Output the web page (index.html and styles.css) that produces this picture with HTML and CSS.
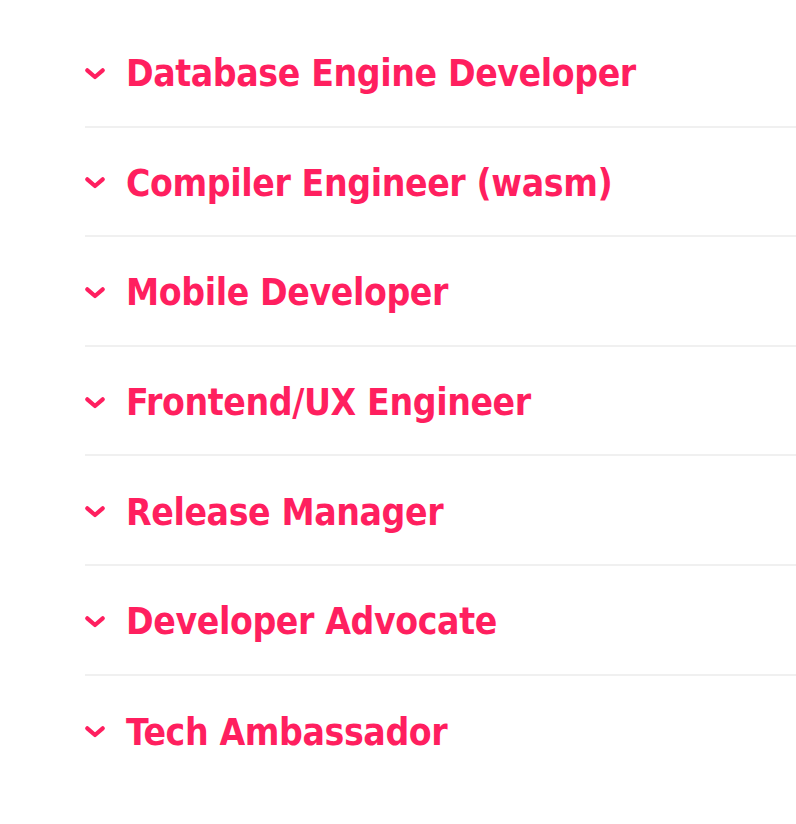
FILE: index.html
```html
<!DOCTYPE html>
<html>
<head>
<meta charset="utf-8">
<link rel="stylesheet" href="styles.css">
</head>
<body>
<ul class="list">
  <li class="item"><svg class="chev" viewBox="0 0 20 12"><path d="M2.3 2.3 L10 9 L17.7 2.3"/></svg><span class="title">Database Engine Developer</span></li>
  <li class="item"><svg class="chev" viewBox="0 0 20 12"><path d="M2.3 2.3 L10 9 L17.7 2.3"/></svg><span class="title">Compiler Engineer (wasm)</span></li>
  <li class="item"><svg class="chev" viewBox="0 0 20 12"><path d="M2.3 2.3 L10 9 L17.7 2.3"/></svg><span class="title">Mobile Developer</span></li>
  <li class="item"><svg class="chev" viewBox="0 0 20 12"><path d="M2.3 2.3 L10 9 L17.7 2.3"/></svg><span class="title">Frontend/UX Engineer</span></li>
  <li class="item"><svg class="chev" viewBox="0 0 20 12"><path d="M2.3 2.3 L10 9 L17.7 2.3"/></svg><span class="title">Release Manager</span></li>
  <li class="item"><svg class="chev" viewBox="0 0 20 12"><path d="M2.3 2.3 L10 9 L17.7 2.3"/></svg><span class="title">Developer Advocate</span></li>
  <li class="item"><svg class="chev" viewBox="0 0 20 12"><path d="M2.3 2.3 L10 9 L17.7 2.3"/></svg><span class="title">Tech Ambassador</span></li>
</ul>
</body>
</html>
```
FILE: styles.css
```css
html, body {
  margin: 0;
  padding: 0;
  background: #ffffff;
}
.list {
  list-style: none;
  margin: 0;
  padding: 18px 0 0 85px;
}
.item {
  box-sizing: border-box;
  display: flex;
  align-items: center;
  height: 109.6px;
  padding-top: 4px;
  border-bottom: 2px solid #f0f0f0;
  gap: 21px;
}
.item:last-child {
  border-bottom: none;
}
.chev {
  width: 20px;
  height: 12px;
  flex: none;
}
.chev path {
  fill: none;
  stroke: #ff1f5f;
  stroke-width: 4.2;
  stroke-linecap: round;
  stroke-linejoin: round;
}
.title {
  font-family: "DejaVu Sans Condensed", "DejaVu Sans", sans-serif;
  font-stretch: condensed;
  font-weight: bold;
  font-size: 37px;
  letter-spacing: -0.4px;
  color: #ff1f5f;
  line-height: 1;
}
```
